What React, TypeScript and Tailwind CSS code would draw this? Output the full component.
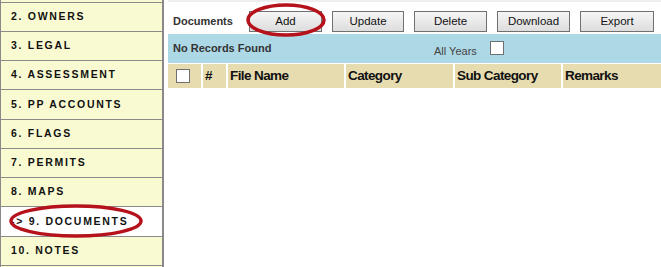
import React from 'react';

const navItems = [
  '2. OWNERS',
  '3. LEGAL',
  '4. ASSESSMENT',
  '5. PP ACCOUNTS',
  '6. FLAGS',
  '7. PERMITS',
  '8. MAPS',
  '-> 9. DOCUMENTS',
  '10. NOTES',
];

const buttons = [
  { label: 'Add', w: 'w-[73px]' },
  { label: 'Update', w: 'w-[72px]' },
  { label: 'Delete', w: 'w-[73px]' },
  { label: 'Download', w: 'w-[73px]' },
  { label: 'Export', w: 'w-[74px]' },
];

const columns = [
  { label: '#', w: 'w-[23px]' },
  { label: 'File Name', w: 'w-[116px]' },
  { label: 'Category', w: 'w-[107px]' },
  { label: 'Sub Category', w: 'w-[106px]' },
  { label: 'Remarks', w: 'flex-1' },
];

function Box({ className }: { className?: string }) {
  return <span className={`block w-[14px] h-[14px] bg-white border border-[#6f6f6f] ${className ?? ''}`} />;
}

export default function App() {
  return (
    <div className="relative w-[661px] h-[267px] overflow-hidden bg-white flex font-['Liberation_Sans',Arial,sans-serif]">
      {/* Sidebar */}
      <aside className="w-[164px] h-full flex flex-col pt-[1.5px] bg-[#fafad2] border-l border-r-2 border-[#8a8a8a] shrink-0">
        {navItems.map((item) => {
          const active = item.startsWith('->');
          return (
            <div
              key={item}
              className={`h-[29.25px] shrink-0 flex items-center pl-[10px] border-t border-[#8a8a8a] text-[10.5px] font-bold tracking-[1.7px] text-[#111] ${active ? 'bg-white' : ''}`}
            >
              {item}
            </div>
          );
        })}
        <div className="flex-1 border-t border-[#8a8a8a]" />
      </aside>

      {/* Main */}
      <main className="flex-1 ml-[4px] flex flex-col border-t-2 border-[#eeeeee]">
        <div className="h-[32px] flex items-center gap-[10px] pl-[5px] pt-[9px] pb-[2px]">
          <span className="w-[66px] text-[11px] font-bold text-[#333]">Documents</span>
          <div className="flex gap-[10px]">
            {buttons.map((b) => (
              <button
                key={b.label}
                className={`${b.w} h-[21px] border border-[#707070] bg-gradient-to-b from-[#f6f6f6] to-[#dddddd] text-[11.5px] text-[#111]`}
              >
                {b.label}
              </button>
            ))}
          </div>
        </div>

        <div className="h-[29px] bg-[#add8e6] flex items-center pl-[5px]">
          <span className="w-[261px] text-[11px] font-bold text-[#333] pb-[1px]">No Records Found</span>
          <span className="text-[11px] text-[#444] mt-[5px] mr-[13px]">All Years</span>
          <Box className="-mt-[2px]" />
        </div>

        <div className="h-[24px] mt-px flex gap-[2px] bg-white">
          <div className="w-[33px] bg-[#e6dcb0] flex items-center pl-[8px]">
            <Box />
          </div>
          {columns.map((c) => (
            <div
              key={c.label}
              className={`${c.w} bg-[#e6dcb0] flex items-center pl-[2px] text-[13.5px] tracking-[-0.6px] font-bold text-[#111]`}
            >
              {c.label}
            </div>
          ))}
        </div>
      </main>

      {/* red highlight rings */}
      <svg className="absolute left-0 top-0 pointer-events-none" width="661" height="267">
        <ellipse cx="286" cy="20" rx="38" ry="15" fill="none" stroke="#b5121b" strokeWidth="3.5" />
        <ellipse cx="76" cy="221" rx="65" ry="15" fill="none" stroke="#b5121b" strokeWidth="3.5" />
      </svg>
    </div>
  );
}
